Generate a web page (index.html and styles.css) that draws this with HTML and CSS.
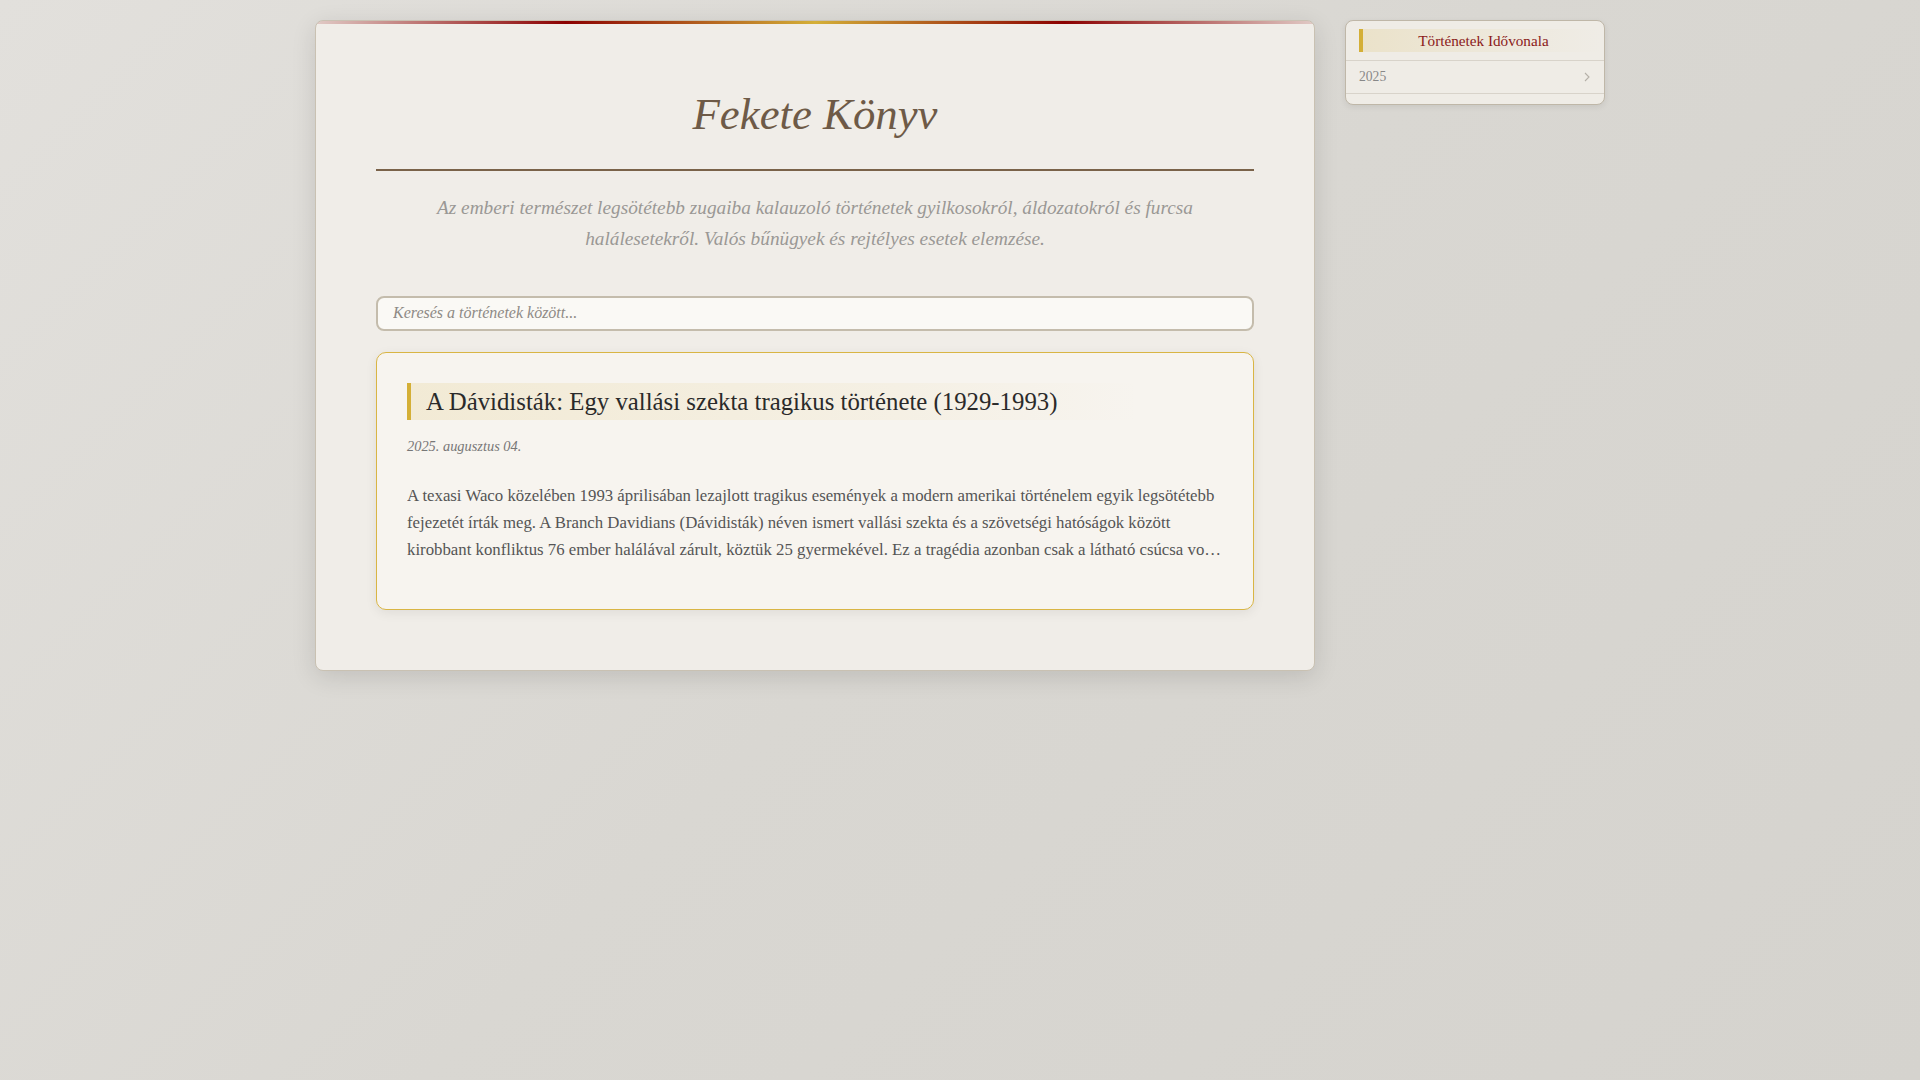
FILE: index.html
```html
<!DOCTYPE html>
<html lang="hu">
<head>
<meta charset="utf-8">
<title>Fekete Könyv</title>
<link rel="stylesheet" href="styles.css">
</head>
<body>
<div class="layout">
  <main class="main-card">
    <header class="site-header">
      <h1 class="site-title">Fekete Könyv</h1>
    </header>
    <p class="site-desc">Az emberi természet legsötétebb zugaiba kalauzoló történetek gyilkosokról, áldozatokról és furcsa halálesetekről. Valós bűnügyek és rejtélyes esetek elemzése.</p>
    <input class="search" type="text" placeholder="Keresés a történetek között...">
    <article class="post">
      <h2 class="post-title">A Dávidisták: Egy vallási szekta tragikus története (1929-1993)</h2>
      <div class="post-date">2025. augusztus 04.</div>
      <p class="post-excerpt">A texasi Waco közelében 1993 áprilisában lezajlott tragikus események a modern amerikai történelem egyik legsötétebb fejezetét írták meg. A Branch Davidians (Dávidisták) néven ismert vallási szekta és a szövetségi hatóságok között kirobbant konfliktus 76 ember halálával zárult, köztük 25 gyermekével. Ez a tragédia azonban csak a látható csúcsa vo…</p>
    </article>
  </main>
  <aside class="sidebar">
    <div class="side-head">Történetek Idővonala</div>
    <div class="side-row">
      <span class="side-year">2025</span>
      <svg class="chev" width="6" height="10" viewBox="0 0 6 10"><path d="M1 1 L5 5 L1 9" fill="none" stroke="#b5b0a8" stroke-width="1.1"/></svg>
    </div>
  </aside>
</div>
</body>
</html>
```

FILE: styles.css
```css
html, body {
  margin: 0;
  min-height: 100%;
}
body {
  padding: 20px 0;
  box-sizing: border-box;
  min-height: 100vh;
  background: linear-gradient(135deg, #e2e0dc 0%, #d9d7d2 50%, #d5d3ce 100%);
  font-family: "Liberation Serif", "Times New Roman", serif;
  color: #555;
}
.layout {
  width: 1290px;
  margin: 0 auto;
  display: flex;
  gap: 30px;
  align-items: flex-start;
}
.main-card {
  position: relative;
  flex: 0 0 1000px;
  box-sizing: border-box;
  padding: 60px;
  background: #f0ede8;
  border: 1px solid #c9c1b2;
  border-radius: 8px;
  box-shadow: 0 6px 24px rgba(0, 0, 0, 0.12);
  overflow: hidden;
}
.main-card::before {
  content: "";
  position: absolute;
  top: 0;
  left: 0;
  right: 0;
  height: 3px;
  background: linear-gradient(90deg, rgba(139, 0, 0, 0.15) 0%, #8b0000 25%, #d4af37 50%, #8b0000 75%, rgba(139, 0, 0, 0.15) 100%);
}
.site-header {
  padding: 7px 0 27px;
  border-bottom: 2px solid #7a6249;
  text-align: center;
}
.site-title {
  margin: 0;
  font-size: 44.8px;
  line-height: 1.2;
  font-style: italic;
  font-weight: normal;
  color: #6e5a47;
}
.site-desc {
  max-width: 800px;
  margin: 22px auto 41px;
  text-align: center;
  font-style: italic;
  font-size: 19.3px;
  line-height: 1.6;
  color: #9a9895;
}
.search {
  display: block;
  width: 100%;
  box-sizing: border-box;
  height: 35px;
  padding: 0 15px;
  border: 2px solid #c4bcac;
  border-radius: 8px;
  background: #faf9f5;
  font-family: "Liberation Serif", "Times New Roman", serif;
  font-size: 16px;
  font-style: italic;
  color: #555;
  outline: none;
}
.search::placeholder {
  color: #8e8a85;
  font-style: italic;
}
.post {
  margin-top: 21px;
  padding: 30px;
  background: #f7f4ef;
  border: 1px solid #d9b544;
  border-radius: 10px;
  box-shadow: 0 3px 12px rgba(0, 0, 0, 0.07);
}
.post-title {
  margin: 0;
  padding: 4px 15px;
  border-left: 4px solid #d4af37;
  background: linear-gradient(90deg, rgba(212, 175, 55, 0.14) 0%, rgba(212, 175, 55, 0.06) 60%, rgba(212, 175, 55, 0) 90%);
  font-size: 24.8px;
  line-height: 1.2;
  font-weight: normal;
  color: #2a2a2a;
}
.post-date {
  margin-top: 15px;
  font-size: 14.4px;
  line-height: 22px;
  font-style: italic;
  color: #777;
}
.post-excerpt {
  margin: 26px 0 15px;
  font-size: 16.8px;
  line-height: 1.6;
  color: #555;
  display: -webkit-box;
  -webkit-line-clamp: 3;
  -webkit-box-orient: vertical;
  overflow: hidden;
}
.sidebar {
  flex: 0 0 260px;
  box-sizing: border-box;
  padding: 8px 0 10px;
  background: #efece6;
  border: 1px solid #bfb7a8;
  border-radius: 8px;
  box-shadow: 0 2px 6px rgba(0, 0, 0, 0.08);
}
.side-head {
  margin: 0 0 8px 13px;
  padding: 2px 0;
  border-left: 4px solid #d4af37;
  background: linear-gradient(90deg, rgba(212, 175, 55, 0.16) 0%, rgba(212, 175, 55, 0.05) 60%, rgba(212, 175, 55, 0) 100%);
  text-align: center;
  font-size: 15.2px;
  line-height: 19px;
  color: #8b1a1a;
}
.side-row {
  display: flex;
  align-items: center;
  justify-content: space-between;
  padding: 8px 13px;
  border-top: 1px solid #d8d3ca;
  border-bottom: 1px solid #d8d3ca;
}
.side-year {
  font-size: 13.6px;
  line-height: 16px;
  color: #888;
}
.chev {
  display: block;
  margin-right: 1px;
}
```
